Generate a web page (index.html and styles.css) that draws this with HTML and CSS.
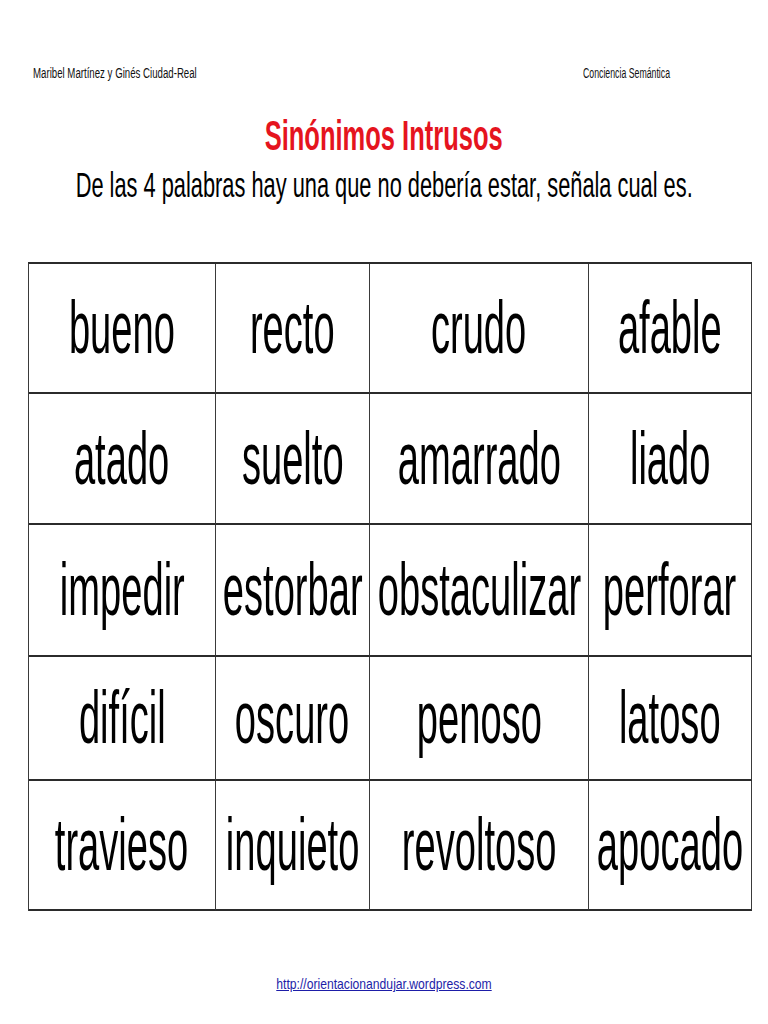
FILE: index.html
```html
<!DOCTYPE html>
<html lang="es">
<head>
<meta charset="utf-8">
<title>Sinónimos Intrusos</title>
<link rel="stylesheet" href="styles.css">
</head>
<body>
<div class="page">
  <div class="header">
    <span class="hdr hdr-left">Maribel Martínez y Ginés Ciudad-Real</span>
    <span class="hdr hdr-right">Conciencia Semántica</span>
  </div>
  <h1 class="title"><span class="title-text">Sinónimos Intrusos</span></h1>
  <p class="subtitle"><span class="subtitle-text">De las 4 palabras hay una que no debería estar, señala cual es.</span></p>
  <div class="grid">
    <div class="cell"><span class="word">bueno</span></div>
    <div class="cell"><span class="word">recto</span></div>
    <div class="cell"><span class="word">crudo</span></div>
    <div class="cell"><span class="word">afable</span></div>
    <div class="cell"><span class="word">atado</span></div>
    <div class="cell"><span class="word">suelto</span></div>
    <div class="cell"><span class="word">amarrado</span></div>
    <div class="cell"><span class="word">liado</span></div>
    <div class="cell"><span class="word">impedir</span></div>
    <div class="cell"><span class="word">estorbar</span></div>
    <div class="cell"><span class="word">obstaculizar</span></div>
    <div class="cell"><span class="word">perforar</span></div>
    <div class="cell"><span class="word">difícil</span></div>
    <div class="cell"><span class="word">oscuro</span></div>
    <div class="cell"><span class="word">penoso</span></div>
    <div class="cell"><span class="word">latoso</span></div>
    <div class="cell"><span class="word">travieso</span></div>
    <div class="cell"><span class="word">inquieto</span></div>
    <div class="cell"><span class="word">revoltoso</span></div>
    <div class="cell"><span class="word">apocado</span></div>
  </div>
  <div class="footer"><a class="link" href="#">http://orientacionandujar.wordpress.com</a></div>
</div>
</body>
</html>
```

FILE: styles.css
```css
html, body {
  margin: 0;
  padding: 0;
  background: #ffffff;
}

body {
  font-family: "Liberation Sans", Arial, sans-serif;
  color: #000000;
  width: 768px;
  height: 1024px;
  overflow: hidden;
}

.page {
  width: 768px;
}

.header {
  display: grid;
  grid-template-columns: 550px 1fr;
  padding-top: 66px;
  padding-left: 33px;
  height: 14px;
  line-height: 14px;
  font-size: 14px;
  color: #111111;
}

.hdr {
  display: inline-block;
  white-space: nowrap;
  transform-origin: left center;
}

.hdr-left {
  transform: scaleX(0.69);
}

.hdr-right {
  transform: scaleX(0.625);
}

.title {
  display: flex;
  justify-content: center;
  margin: 34px 0 0 0;
  font-size: 43px;
  line-height: 43px;
  font-weight: bold;
  color: #e5141e;
}

.title-text,
.subtitle-text,
.word,
.link {
  display: inline-block;
  white-space: nowrap;
  transform-origin: center center;
}

.title-text {
  transform: scaleX(0.593);
}

.subtitle {
  display: flex;
  justify-content: center;
  margin: 10px 0 0 0;
  font-size: 35px;
  line-height: 35px;
}

.subtitle-text {
  transform: scaleX(0.623);
}

.grid {
  display: grid;
  grid-template-columns: 187px 154px 219px 163px;
  grid-template-rows: 130px 131px 132px 124px 130px;
  width: 723px;
  margin: 60px 0 0 28px;
  border-top: 2px solid #2b2b2b;
  border-left: 1px solid #3a3a3a;
}

.cell {
  display: flex;
  justify-content: center;
  align-items: center;
  min-width: 0;
  border-right: 1px solid #3a3a3a;
  border-bottom: 2px solid #2b2b2b;
}

.word {
  font-size: 74px;
  line-height: 74px;
  transform: scaleX(0.515);
}

.footer {
  display: flex;
  justify-content: center;
  margin-top: 65px;
  font-size: 15px;
  line-height: 15px;
}

.link {
  color: #1d1da8;
  text-decoration: underline;
  transform: scaleX(0.81);
}
```
